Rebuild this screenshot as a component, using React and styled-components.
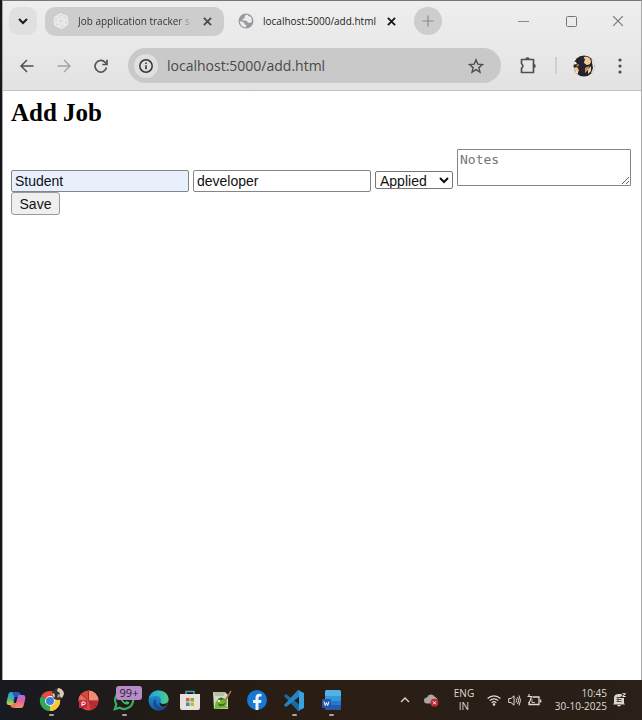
import React from "react";
import styled, { createGlobalStyle } from "styled-components";

const GlobalStyle = createGlobalStyle`
  *, *::before, *::after { box-sizing: border-box; }
  html, body { margin: 0; }
  body { background: #17171b; }
  button { font: inherit; color: inherit; }
`;

const ui = `"Open Sans", "Noto Sans", sans-serif`;

const Desktop = styled.div`
  min-height: 100vh;
  display: flex;
  flex-direction: column;
  font-family: ${ui};
`;

const BrowserWindow = styled.section`
  flex: 1;
  display: flex;
  flex-direction: column;
  margin-left: 2px;
  background: #fff;
  border: 1px solid #a9a9ab;
  border-top-color: #777578;
  border-bottom: 0;
`;

const Chrome = styled.header`
  background: linear-gradient(#eeeeee, #e9e9e9 50%, #e2e2e2);
  border-bottom: 1px solid #c2c2c2;
`;

const IconButton = styled.button`
  flex: none;
  display: flex;
  align-items: center;
  justify-content: center;
  width: ${(p) => p.$size || 28}px;
  height: ${(p) => p.$height || p.$size || 28}px;
  padding: 0;
  border: 0;
  border-radius: ${(p) => p.$radius || "50%"};
  background: ${(p) => p.$bg || "transparent"};
  color: ${(p) => p.$color || "#4a4a4a"};
`;

const TabStrip = styled.nav`
  display: flex;
  align-items: center;
  height: 40px;
  padding-left: 6px;
`;

const Tab = styled.div`
  display: flex;
  align-items: center;
  gap: 9px;
  width: ${(p) => (p.$active ? 182 : 179)}px;
  height: 29px;
  padding: 0 12px 0 ${(p) => (p.$active ? 12 : 8)}px;
  margin-left: ${(p) => (p.$active ? 2 : 8)}px;
  margin-right: ${(p) => (p.$active ? 6 : 0)}px;
  border-radius: 10px;
  background: ${(p) => (p.$active ? "transparent" : "#cdcdcd")};
  color: ${(p) => (p.$active ? "#1c1c1c" : "#333")};
  svg { flex: none; }
`;

const TabTitle = styled.span`
  flex: 1;
  font-size: 10px;
  line-height: 16px;
  white-space: nowrap;
  mask-image: ${(p) => (p.$fade ? "linear-gradient(90deg, #000 86%, transparent)" : "none")};
`;

const WindowControls = styled.div`
  display: flex;
  margin-left: auto;
`;

const Toolbar = styled.div`
  display: flex;
  align-items: center;
  height: 49px;
  padding: 0 3px 0 5px;
`;

const AddressBar = styled.div`
  flex: 1;
  min-width: 0;
  display: flex;
  align-items: center;
  gap: 9px;
  height: 35px;
  margin: 0 9px 0 8px;
  padding: 0 12px 0 6px;
  border-radius: 18px;
  background: #c9c9c9;
`;

const Address = styled.input`
  flex: 1;
  min-width: 0;
  padding: 0;
  border: 0;
  outline: 0;
  background: transparent;
  font: 14px/20px ${ui};
  color: #4a4a4a;
`;

const Divider = styled.span`
  width: 2px;
  height: 17px;
  margin: 0 8px;
  background: #cfcfcf;
`;

const Page = styled.main`
  flex: 1;
  padding: 8px;
  font: 16px/18px "Liberation Serif", serif;
  color: #000;
`;

const Heading = styled.h2`
  margin: 0 0 22px;
  font-size: 25px;
  line-height: 28px;
`;

const TextField = styled.input`
  width: 178px;
  height: 22px;
  padding: 1px 3px;
  border: 1px solid #858585;
  border-radius: 2px;
  background: ${(p) => (p.$filled ? "#e8f0fe" : "#fff")};
  font: 14px/16px "Liberation Sans", sans-serif;
  color: #111;
`;

const StatusSelect = styled.select`
  width: 78px;
  height: 18px;
  padding: 0;
  border: 1px solid #767676;
  border-radius: 2px;
  background: #fff;
  font: 14px/16px "Liberation Sans", sans-serif;
  color: #111;
`;

const NotesArea = styled.textarea`
  width: 174px;
  height: 37px;
  padding: 2px;
  border: 1px solid #858585;
  border-radius: 1px;
  font: 13px/16px "DejaVu Sans Mono", monospace;
  &::placeholder { color: #757575; }
`;

const SaveButton = styled.button`
  height: 23px;
  width: 49px;
  padding: 0;
  border: 1px solid #9a9a9a;
  border-radius: 3px;
  background: #efefef;
  font: 14px/16px "Liberation Sans", sans-serif;
  color: #111;
`;

const Taskbar = styled.footer`
  display: flex;
  align-items: center;
  height: 40px;
  background: linear-gradient(90deg, #181a21, #211b17 22%, #2a1d14 45%, #292017);
  color: #dedbd6;
`;

const AppButton = styled.button`
  position: relative;
  display: flex;
  align-items: center;
  justify-content: center;
  width: ${(p) => p.$width || 36}px;
  height: 40px;
  padding: 0;
  border: 0;
  background: transparent;
  &::after {
    content: "";
    display: ${(p) => (p.$running ? "block" : "none")};
    position: absolute;
    bottom: 4px;
    width: 5px;
    height: 2px;
    border-radius: 1px;
    background: #a9a39f;
  }
`;

const Badge = styled.span`
  position: absolute;
  top: 6px;
  right: 0;
  width: 26px;
  border-radius: 3px;
  background: #b78bc7;
  color: #251c2a;
  font-size: 11px;
  line-height: 14px;
`;

const Tray = styled.div`
  display: flex;
  align-items: center;
  margin-left: auto;
  padding-right: 11px;
`;

const TrayText = styled.div`
  width: ${(p) => p.$width}px;
  text-align: ${(p) => p.$align || "center"};
  font-size: 10px;
  line-height: 13px;
  white-space: nowrap;
`;

const Line = ({ size = 16, w = 1.5, children, box = 24 }) => (
  <svg width={size} height={size} viewBox={`0 0 ${box} ${box}`} fill="none" stroke="currentColor" strokeWidth={w} aria-hidden="true">
    {children}
  </svg>
);

const Cross = ({ size = 10, w = 2 }) => (
  <Line size={size} box={10} w={w}><path d="M1 1l8 8M9 1l-8 8" /></Line>
);

const Knot = () => (
  <svg width="16" height="16" viewBox="0 0 16 16" fill="none" stroke="#f1f1f1" strokeWidth="1" aria-hidden="true">
    <circle cx="8" cy="8" r="7" fill="#d8d8d8" stroke="#e4e4e4" />
    {[0, 60, 120, 180, 240, 300].map((a) => (
      <path key={a} transform={`rotate(${a} 8 8)`} d="M5 5V3.5a2.6 2.6 0 0 1 5-1L6 5v4.2" />
    ))}
  </svg>
);

const Globe = () => (
  <svg width="16" height="16" viewBox="0 0 16 16" aria-hidden="true">
    <circle cx="8" cy="8" r="7.5" fill="#96999e" />
    <path d="M9 1.6 6.5 3 7 5 4.500 6v1.500l4 .3 1.500 2 2 .2 2-1.500-.6-4.200-2.200-1zM1.800 8l4.200 1.400.7 2 1.800.6-.7 2.300C4.300 14.200 2 11.500 1.800 8z" fill="#ececec" />
  </svg>
);

const Avatar = () => (
  <svg width="22" height="22" viewBox="0 0 22 22" aria-hidden="true">
    <defs><clipPath id="face"><circle cx="11" cy="11" r="10.5" /></clipPath></defs>
    <g clipPath="url(#face)">
      <path fill="#242126" d="M0 0h22v22H0z" />
      <path fill="#edc78e" d="M11 2c5-1 7 2 7 5l-2 4-3 1-3-5zM0 13l4-1 2 3-2 5-6 1z" />
      <path fill="#f8f1e1" d="M0 6l3 1 1 2-5 1zM18 1l4 4v15l-5 1 3-8zM3 16l2 1-1 3z" />
      <path fill="#292231" d="M8 1l4 3-1 4 3 2 4-1-2 5-5 7-4-5-2-5z" />
      <path fill="#e8cf9f" d="M11 7l4-2 1 3-2 2zM15 14l3-3v5l-3 3z" />
      <path fill="#c49465" d="M12 13l4-2-1 4-3 3zM3 10l3-1-1 3z" />
    </g>
  </svg>
);

const Copilot = () => (
  <svg width="20" height="18" viewBox="0 0 20 18" aria-hidden="true">
    <defs>
      <linearGradient id="cpA" x2="0" y2="1"><stop stopColor="#2a9ee8" /><stop offset=".55" stopColor="#48b88c" /><stop offset="1" stopColor="#e6c640" /></linearGradient>
      <linearGradient id="cpB" x2="0" y2="1"><stop stopColor="#9a70e8" /><stop offset=".5" stopColor="#e46599" /><stop offset="1" stopColor="#f29564" /></linearGradient>
    </defs>
    <path fill="url(#cpA)" d="M5 1h7L8 14H3c-2 0-3-2-2-5l1.500-6Q3 1 5 1z" />
    <path fill="url(#cpB)" d="M12 4h5c2 0 3 2 2 5l-1.500 6q-.5 2-2.500 2H8z" />
    <path fill="#2658c7" d="M6 1h6q2 0 3 3h-2q-2 0-3 4l-1 3-2-1 1-4z" />
    <path fill="#e67961" d="M4 14q3 0 4-3h3l-1 4q-1 2-3 2-2 0-3-3z" />
    <path fill="#191b24" d="M9.200 6h2.300L10 12H7.800z" />
  </svg>
);

const ChromeLogo = () => (
  <svg width="26" height="26" viewBox="0 0 26 26" aria-hidden="true">
    <path fill="#e84a3c" d="M12 14 3.300 9A10 10 0 0 1 20.700 9z" />
    <path fill="#f6c834" d="M12 14 20.700 9A10 10 0 0 1 12 24z" />
    <path fill="#35a853" d="M12 14 12 24A10 10 0 0 1 3.300 9z" />
    <path fill="#f6c834" d="M12 9h8.700a10 10 0 0 1-8.700 15l4.300-7.500z" />
    <circle cx="12" cy="14" r="5" fill="#f3f3f3" /><circle cx="12" cy="14" r="4" fill="#3f7de0" />
    <circle cx="20" cy="7" r="6" fill="#353132" />
    <path fill="#d8ccba" d="M20 1c3 0 6 3 6 6l-2 4-3-2 1-3-3-2zM14 7l2-1 1 3-1 2z" />
    <path fill="#ad9378" d="M20 7l2 1-1 3-2-1z" />
  </svg>
);

const RedDisc = () => (
  <svg width="21" height="21" viewBox="0 0 21 21" aria-hidden="true">
    <circle cx="10.5" cy="10.5" r="10" fill="#d9483f" />
    <path fill="#ef8c72" d="M10.500.5a10 10 0 0 1 10 10h-10z" />
    <path fill="#b92d35" d="M10.500 10.500h10a10 10 0 0 1-8 9.800z" />
    <path fill="#e66c57" d="M3 4l7.500 6.500-6 .5-4-.5A10 10 0 0 1 3 4z" />
    <path d="M10.500.5v10l8 6M10.500 10.500 3 4" stroke="#9f2934" fill="none" />
    <rect x="1" y="10" width="8" height="8" rx="1" fill="#c22b43" />
    <path d="M4 16v-4h2a1 1 0 0 1 0 2.500H4" stroke="#fff" fill="none" />
  </svg>
);

const WhatsApp = () => (
  <svg width="22" height="22" viewBox="0 0 24 24" fill="none" aria-hidden="true">
    <path d="M2 22l1.600-5.200A9.800 9.800 0 1 1 7.300 20.500z" stroke="#36ad63" strokeWidth="2.4" />
    <path d="M8.200 6.600c-1.500 1-1.500 3 .3 5.600 2.200 3.200 4.800 5 7.200 4.700 1.500-.3 2-1.400 2-2.500l-2.800-1.400-1.500 1.500c-1.500-.5-3-2-3.600-3.500l1-1.200-1.100-3z" fill="#48b76b" />
  </svg>
);

const Edge = () => (
  <svg width="21" height="21" viewBox="0 0 21 21" aria-hidden="true">
    <defs>
      <linearGradient id="edA"><stop stopColor="#249fdb" /><stop offset=".6" stopColor="#32bdba" /><stop offset="1" stopColor="#57ca73" /></linearGradient>
      <linearGradient id="edB" x2="0" y2="1"><stop stopColor="#2496d4" /><stop offset="1" stopColor="#1560af" /></linearGradient>
    </defs>
    <circle cx="10.5" cy="10.5" r="10" fill="url(#edB)" />
    <path fill="url(#edA)" d="M.6 9C2 3 6 .5 10.500.5c6 0 10 4 10 8.500 0 3-2 5-5 5-3 0-4-1-3-2.500C14 8 11 6 8 6 4.500 6 2 7 .6 9z" />
    <path fill="#174b8b" d="M8 9c-1 6 3 9 10 8-3 4-8 4-11 1-3-3-2-8 1-9z" />
    <path fill="#211b17" d="M12.500 11.500C11.500 13 13 14 15.500 14c2 0 3.500-.8 4.500-2-.5 2-1.500 3.500-3 4.500-4 1-7-2-4.500-5z" />
  </svg>
);

const Store = () => (
  <svg width="20" height="21" viewBox="0 0 20 21" aria-hidden="true">
    <path d="M6 5V1.500h8V5" fill="none" stroke="#4aa3c5" strokeWidth="1.5" />
    <path fill="#e7e2dc" d="M0 4h20v14q0 2-2 2H2q-2 0-2-2z" />
    <path fill="#d46243" d="M6 8h3.500v3.500H6z" /><path fill="#85a83e" d="M10.500 8H14v3.500h-3.500z" />
    <path fill="#398fc2" d="M6 12.500h3.500V16H6z" /><path fill="#dfaa38" d="M10.500 12.500H14V16h-3.500z" />
  </svg>
);

const NotepadPlus = () => (
  <svg width="20" height="20" viewBox="0 0 20 20" aria-hidden="true">
    <path fill="#d5d8c9" d="M1 2h12l3 3v14H2z" />
    <path d="M2 3h11M3 5h9" stroke="#8fa77b" />
    <path fill="#75b72f" d="M3 17c0-6 3-9 8-9 4 0 5 4 3 8l3 2-15 1z" />
    <path fill="#386f26" d="M6 9q3-3 6 0l-2 1-4 1zM6 13q4 3 8-1-1 5-7 4z" />
    <circle cx="7" cy="11" r="1.2" fill="#e6f1c3" />
    <path d="M19 1l-6 10" stroke="#9c753d" strokeWidth="1.5" />
  </svg>
);

const Facebook = () => (
  <svg width="20" height="20" viewBox="0 0 20 20" aria-hidden="true">
    <circle cx="10" cy="10" r="10" fill="#1778d4" />
    <path fill="#f0f4f8" d="M8.500 20v-7H6v-3h2.500V8c0-3 1.500-4.300 4-4.300l2 .2v2.500H13c-1.200 0-1.500.6-1.500 1.500V10h3l-.5 3h-2.500v7z" />
  </svg>
);

const VSCode = () => (
  <svg width="21" height="21" viewBox="0 0 21 21" aria-hidden="true">
    <path fill="#176aa6" d="M0 6l2-2 14 11v5l-2 1z" />
    <path fill="#2485c5" d="M0 15l2 2L16 6V1l-2-1z" />
    <path fill="#37a2dd" d="M14 0l6 3v15l-6 3 1-2V2z" />
  </svg>
);

const Word = () => (
  <svg width="19" height="20" viewBox="0 0 19 20" aria-hidden="true">
    <rect x="3" y="0" width="16" height="20" rx="2" fill="#2878c7" />
    <path fill="#51b2e8" d="M5 0h12q2 0 2 2v4H3V2q0-2 2-2z" />
    <path fill="#3397dc" d="M3 6h16v5H3z" /><path fill="#2459ad" d="M3 15h16v3q0 2-2 2H5q-2 0-2-2z" />
    <rect y="9" width="9" height="9" rx="1" fill="#2355ad" />
    <path d="M2 11.500l1.300 4 1.200-3 1.200 3 1.300-4" stroke="#fff" fill="none" />
  </svg>
);

const Cloud = () => (
  <svg width="15" height="13" viewBox="0 0 15 13" aria-hidden="true">
    <path fill="#a9a6a3" d="M3 9.500a3 3 0 0 1 0-6 4.300 4.300 0 0 1 8-.5 3.300 3.300 0 0 1 2 5l-3 1.500z" />
    <circle cx="10.5" cy="8.8" r="4" fill="#bf2634" />
    <path d="M9 7.300l3 3m0-3-3 3" stroke="#fff" />
  </svg>
);

const Wifi = () => (
  <Line size={14} box={14} w={1.1}>
    <path d="M.6 5.500a9 9 0 0 1 12.800 0M2.700 7.700a6 6 0 0 1 8.600 0M4.700 9.800a3.300 3.300 0 0 1 4.600 0" />
    <circle cx="7" cy="11.5" r=".8" fill="currentColor" />
  </Line>
);

const Speaker = () => (
  <Line size={13} box={13} w={1}>
    <path d="M.7 4.500H3l3-2.700v9.400L3 8.500H.7zM8 4.500q1.300 2 0 4M9.500 3q2.500 3.500 0 7M11 1.500q3 5 0 10" />
  </Line>
);

const Battery = () => (
  <svg width="15" height="13" viewBox="0 0 15 13" fill="none" stroke="currentColor" aria-hidden="true">
    <path d="M5.500 3H12v7.500H2V8M13.700 5.500v3" strokeWidth="1.3" />
    <path d="M2 0v3M.5 2.500h4L3 7l-1 2" strokeWidth="1.2" />
    <path d="M5 5v3.500h3" strokeWidth=".8" />
  </svg>
);

const Bell = () => (
  <svg width="13" height="14" viewBox="0 0 13 14" aria-hidden="true">
    <path fill="#d9d6d1" d="M1 10V5q0-4 5-4h5v9l1 1.500H0zM4 12h4q-2 3-4 0z" />
    <path d="M3.500 4.500h4M3.500 6.500h5M3.500 8.500h5M5 4.500v4" stroke="#4b3f34" fill="none" strokeWidth=".9" />
    <path d="M8.500.7h4L9 4h3.500" stroke="#292017" fill="none" strokeWidth="2" />
    <path d="M9.500.7h3L9.700 3.500h3" stroke="#eee" fill="none" />
  </svg>
);

const apps = [
  { name: "Copilot", Icon: Copilot, width: 32 },
  { name: "Google Chrome", Icon: ChromeLogo, running: true, width: 38 },
  { name: "Presentation", Icon: RedDisc },
  { name: "WhatsApp", Icon: WhatsApp, running: true, badge: "99+" },
  { name: "Microsoft Edge", Icon: Edge, width: 32 },
  { name: "Microsoft Store", Icon: Store, width: 32 },
  { name: "Notepad++", Icon: NotepadPlus, width: 32 },
  { name: "Facebook", Icon: Facebook, width: 38 },
  { name: "Visual Studio Code", Icon: VSCode, running: true },
  { name: "Word", Icon: Word, running: true, width: 38 },
];

export default function App() {
  return (
    <Desktop>
      <GlobalStyle />
      <BrowserWindow>
        <Chrome>
          <TabStrip>
            <IconButton aria-label="Search tabs" $bg="#e0e0e0" $radius="9px" $color="#1c1c1c">
              <Line size={10} box={10} w={2}><path d="M1 3l4 4 4-4" /></Line>
            </IconButton>
            <Tab>
              <Knot />
              <TabTitle $fade>Job application tracker s</TabTitle>
              <IconButton aria-label="Close Job application tracker" $size={10}><Cross size={9} /></IconButton>
            </Tab>
            <Tab $active>
              <Globe />
              <TabTitle>localhost:5000/add.html</TabTitle>
              <IconButton aria-label="Close localhost" $size={10} $color="#161616"><Cross size={9} /></IconButton>
            </Tab>
            <IconButton aria-label="New tab" $bg="#cdcdcd" $color="#8c8c8c">
              <Line size={12} box={12} w={1.2}><path d="M6 .5v11M.5 6h11" /></Line>
            </IconButton>
            <WindowControls>
              <IconButton aria-label="Minimize" $size={48} $height={38} $radius="0" $color="#888">
                <Line size={11} box={11} w={1}><path d="M0 5.500h11" /></Line>
              </IconButton>
              <IconButton aria-label="Maximize" $size={48} $height={38} $radius="0" $color="#777">
                <Line size={11} box={11} w={1}><rect x=".5" y=".5" width="10" height="10" rx="1" /></Line>
              </IconButton>
              <IconButton aria-label="Close window" $size={46} $height={38} $radius="0" $color="#777">
                <Cross size={12} w={1} />
              </IconButton>
            </WindowControls>
          </TabStrip>
          <Toolbar>
            <IconButton aria-label="Back" $size={37} $color="#505050">
              <Line size={14} box={14} w={1.5}><path d="M13.500 7H1.500M7 1 1 7l6 6" /></Line>
            </IconButton>
            <IconButton aria-label="Forward" $size={37} $color="#a3a3a3">
              <Line size={14} box={14} w={1.4}><path d="M.5 7h12M7 1l6 6-6 6" /></Line>
            </IconButton>
            <IconButton aria-label="Reload" $size={38} $color="#555">
              <Line size={14} box={14} w={1.7}><path d="M12.500 8.500a5.800 5.800 0 1 1-1.200-5L13 5" /><path d="M13 .8V5.500H8.300" /></Line>
            </IconButton>
            <AddressBar>
              <IconButton aria-label="Site information" $size={24} $bg="#dfdfdf" $color="#333">
                <Line size={14} box={14} w={1.5}><circle cx="7" cy="7" r="6.2" /><path d="M7 6.200v4M7 3.500V5" /></Line>
              </IconButton>
              <Address aria-label="Address" defaultValue="localhost:5000/add.html" />
              <IconButton aria-label="Bookmark" $size={26} $color="#505050">
                <Line size={16} box={16} w={1.4}><path d="M8 1.800l1.800 4.300 4.700.4-3.600 3.100 1.100 4.600L8 11.700l-4 2.500 1.100-4.600-3.600-3.100 4.700-.4z" /></Line>
              </IconButton>
            </AddressBar>
            <IconButton aria-label="Extensions" $size={37} $color="#505050">
              <Line size={19} box={19} w={1.7}>
                <path strokeLinejoin="round" d="M2.500 3.500h12v13h-12v-4q2.700-2.300 0-5z" />
                <path d="M7 3a1.700 1.700 0 0 1 3 0M15 8.500a1.700 1.700 0 0 1 0 3" fill="currentColor" />
              </Line>
            </IconButton>
            <Divider />
            <IconButton aria-label="Profile" $size={37}><Avatar /></IconButton>
            <IconButton aria-label="Menu" $size={36} $color="#4a4a4a">
              <svg width="4" height="16" viewBox="0 0 4 16" fill="currentColor" aria-hidden="true">
                <circle cx="2" cy="2" r="1.6" /><circle cx="2" cy="8" r="1.6" /><circle cx="2" cy="14" r="1.6" />
              </svg>
            </IconButton>
          </Toolbar>
        </Chrome>
        <Page>
          <Heading>Add Job</Heading>
          <form onSubmit={(e) => e.preventDefault()}>
            <TextField $filled aria-label="Company" defaultValue="Student" />{" "}
            <TextField aria-label="Role" defaultValue="developer" />{" "}
            <StatusSelect aria-label="Status" defaultValue="Applied">
              <option>Applied</option>
            </StatusSelect>{" "}
            <NotesArea aria-label="Notes" placeholder="Notes" />{" "}
            <SaveButton type="submit">Save</SaveButton>
          </form>
        </Page>
      </BrowserWindow>
      <Taskbar>
        {apps.map(({ name, Icon, width, running, badge }) => (
          <AppButton key={name} aria-label={name} $width={width} $running={running}>
            <Icon />
            {badge && <Badge>{badge}</Badge>}
          </AppButton>
        ))}
        <Tray>
          <IconButton aria-label="Show hidden icons" $size={26} $color="#dedbd6">
            <Line size={10} box={10} w={1.3}><path d="M1 7l4-4 4 4" /></Line>
          </IconButton>
          <IconButton aria-label="Cloud sync" $size={26}><Cloud /></IconButton>
          <TrayText $width={40}>ENG<br />IN</TrayText>
          <IconButton aria-label="Network" $size={20} $color="#dedbd6"><Wifi /></IconButton>
          <IconButton aria-label="Volume" $size={20} $color="#dedbd6"><Speaker /></IconButton>
          <IconButton aria-label="Battery" $size={20} $color="#dedbd6"><Battery /></IconButton>
          <TrayText $width={63} $align="right">10:45<br />30-10-2025</TrayText>
          <IconButton aria-label="Notifications" $size={24}><Bell /></IconButton>
        </Tray>
      </Taskbar>
    </Desktop>
  );
}
